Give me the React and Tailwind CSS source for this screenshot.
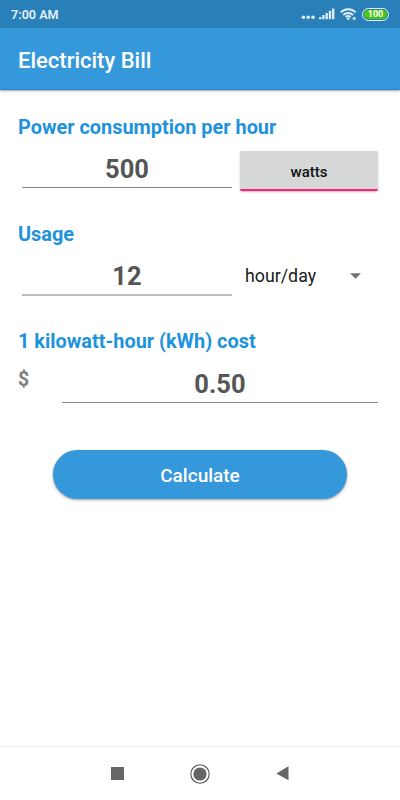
import { useState } from "react";

/* ---------------- STATUS BAR ---------------- */
function StatusBar() {
  return (
    <div className="flex h-7 items-center justify-between bg-[#2980b9] pl-[11px] pr-[11px]">
      <span className="pt-px text-[12.6px] leading-7 font-semibold text-[#e6f1f9]">7:00 AM</span>
      <div className="flex items-center">
        <svg className="mt-px mr-[3px]" width="15" height="14" viewBox="0 0 15 14" fill="#e1edf5">
          <circle cx="2.4" cy="9.3" r="1.8" />
          <circle cx="7.2" cy="9.3" r="1.8" />
          <circle cx="12" cy="9.3" r="1.8" />
        </svg>
        <svg className="mr-[5px]" width="16" height="14" viewBox="0 0 16 14" fill="#dceaf4">
          <rect x="0" y="10" width="2.4" height="2.2" rx="0.5" />
          <rect x="3.2" y="8" width="2.4" height="4.2" rx="0.5" />
          <rect x="6.5" y="6" width="2.4" height="6.2" rx="0.5" />
          <rect x="9.8" y="3.8" width="2.4" height="8.4" rx="0.5" />
          <rect x="13" y="1.5" width="2.4" height="10.7" rx="0.5" />
        </svg>
        <svg className="mr-[5px]" width="17" height="14" viewBox="0 0 17 14" fill="none" stroke="#e1edf5">
          <path d="M0.7 5.4a10.6 10.6 0 0 1 15 0" strokeWidth="1.9" />
          <path d="M3.3 8a7 7 0 0 1 9.8 0" strokeWidth="1.9" />
          <path d="M5.7 10.2a3.6 3.6 0 0 1 5 0" strokeWidth="1.7" />
          <path d="M8.2 13.2L6.5 11.4a2.3 2.3 0 0 1 3.4 0z" fill="#e1edf5" stroke="none" />
          <path d="M13 11.4h2.6a1.3 1.3 0 1 0-.5 1.2" strokeWidth="0.9" />
        </svg>
        <div className="flex h-[13px] w-[27px] items-center justify-center rounded-full border border-[#e8f3e8] bg-[#2980b9] p-px">
          <div className="flex h-[9px] w-full items-center justify-center rounded-full bg-[#47c80d] text-[9px] leading-[9px] font-bold text-white">
            100
          </div>
        </div>
      </div>
    </div>
  );
}

function Label({ children }) {
  return <h2 className="h-6 pt-px text-[19.9px] leading-6 font-bold text-[#1e93db]">{children}</h2>;
}

function NumberField({ value, onChange, className }) {
  return (
    <input
      className={`border-b bg-transparent text-center text-[25.5px] font-bold text-[#555555] outline-none ${className}`}
      inputMode="decimal"
      value={value}
      onChange={(e) => onChange(e.target.value)}
    />
  );
}

export default function App() {
  const [power, setPower] = useState("500");
  const [unit, setUnit] = useState("watts");
  const [usage, setUsage] = useState("12");
  const [cost, setCost] = useState("0.50");

  return (
    <div className="flex h-[800px] w-[400px] flex-col overflow-hidden bg-white font-['Roboto',sans-serif]">
      <StatusBar />

      {/* Toolbar */}
      <header className="flex h-[62px] shrink-0 items-center border-b border-[#1f86cb] bg-[#3498db] pt-[4px] pl-[18px] shadow-[0_1px_2px_rgba(0,0,0,0.35)]">
        <h1 className="text-[22px] leading-7 font-medium text-white">Electricity Bill</h1>
      </header>

      <main className="flex flex-1 flex-col px-[18px] pt-[25px]">
        <section className="h-[107px]">
          <Label>Power consumption per hour</Label>
          <div className="flex items-start pt-[7px] pr-1 pl-1">
            <NumberField value={power} onChange={setPower} className="h-[42px] w-[210px] border-[#888888] pt-[4px]" />
            <button
              className="mt-[5px] ml-2 h-10 w-[138px] rounded-[2px] border-b-2 border-[#ff2079] bg-[#d6d8d7] pt-[5px] text-[15px] font-medium text-[#111111] shadow-[0_1px_2px_rgba(0,0,0,0.25)]"
              onClick={() => setUnit(unit === "watts" ? "kilowatts" : "watts")}
            >
              {unit}
            </button>
          </div>
        </section>

        <section className="h-[107px]">
          <Label>Usage</Label>
          <div className="flex items-start pt-[7px] pl-1">
            <NumberField value={usage} onChange={setUsage} className="h-[43px] w-[210px] border-b-2 border-[#bcbcbc] pt-[5px]" />
            <div className="mt-[9px] ml-[13px] flex h-7 w-[116px] items-center justify-between">
              <span className="text-[17.8px] leading-7 text-[#1a1a1a]">hour/day</span>
              <svg width="11" height="6" viewBox="0 0 11 6" fill="#737373">
                <path d="M0 0.3h11L5.5 5.8z" />
              </svg>
            </div>
          </div>
        </section>

        <section className="h-[107px]">
          <Label>1 kilowatt-hour (kWh) cost</Label>
          <div className="flex items-start justify-between pt-[7px] pr-1">
            <span className="mt-[8px] text-[19.5px] leading-6 font-bold text-[#808080]">$</span>
            <NumberField value={cost} onChange={setCost} className="h-[43px] w-[316px] border-[#888888] pt-[5px]" />
          </div>
        </section>

        <button className="mt-[14px] h-[49px] w-[294px] self-center rounded-full bg-[#3498db] pt-[3px] text-[19px] font-medium text-white shadow-[0_1px_3px_rgba(0,0,0,0.4)]">
          Calculate
        </button>
      </main>

      {/* System navigation */}
      <nav className="flex h-[54px] shrink-0 items-center justify-center gap-[66px] border-t border-[#efefef] pr-px">
        <svg width="13" height="13" viewBox="0 0 13 13" fill="#666666">
          <rect width="13" height="13" />
        </svg>
        <svg width="20" height="20" viewBox="0 0 20 20">
          <circle cx="10" cy="10" r="9.2" fill="none" stroke="#555555" strokeWidth="1.1" />
          <circle cx="10" cy="10" r="6.6" fill="#666666" />
        </svg>
        <svg width="13" height="15" viewBox="0 0 13 15" fill="#666666">
          <path d="M12.5 0.3v14L0.3 7.4z" />
        </svg>
      </nav>
    </div>
  );
}
